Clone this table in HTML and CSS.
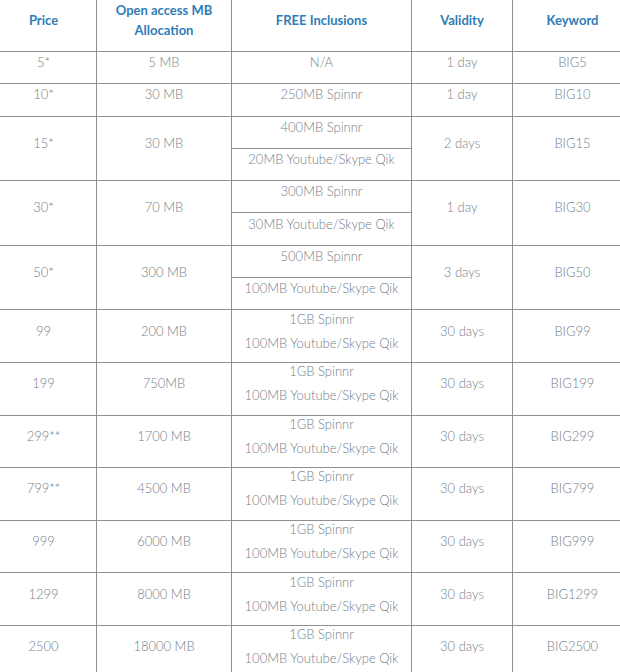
FILE: index.html
```html
<!DOCTYPE html>
<html>
<head>
<meta charset="utf-8">
<link rel="stylesheet" href="styles.css">
</head>
<body>
<table class="plans">
  <colgroup>
    <col class="c-price"><col class="c-mb"><col class="c-free"><col class="c-valid"><col class="c-key">
  </colgroup>
  <thead>
    <tr class="head">
      <th>Price</th>
      <th><div>Open access MB</div><div>Allocation</div></th>
      <th>FREE Inclusions</th>
      <th>Validity</th>
      <th>Keyword</th>
    </tr>
  </thead>
  <tbody>
    <tr class="r1">
      <td>5*</td><td>5 MB</td><td>N/A</td><td>1 day</td><td>BIG5</td>
    </tr>
    <tr class="r1">
      <td>10*</td><td>30 MB</td><td>250MB Spinnr</td><td>1 day</td><td>BIG10</td>
    </tr>
    <tr class="r1">
      <td rowspan="2">15*</td><td rowspan="2">30 MB</td><td>400MB Spinnr</td><td rowspan="2">2 days</td><td rowspan="2">BIG15</td>
    </tr>
    <tr class="r1"><td>20MB Youtube/Skype Qik</td></tr>
    <tr class="r1">
      <td rowspan="2">30*</td><td rowspan="2">70 MB</td><td>300MB Spinnr</td><td rowspan="2">1 day</td><td rowspan="2">BIG30</td>
    </tr>
    <tr class="r1"><td>30MB Youtube/Skype Qik</td></tr>
    <tr class="r1">
      <td rowspan="2">50*</td><td rowspan="2">300 MB</td><td>500MB Spinnr</td><td rowspan="2">3 days</td><td rowspan="2">BIG50</td>
    </tr>
    <tr class="r1"><td>100MB Youtube/Skype Qik</td></tr>
    <tr class="r2">
      <td>99</td><td>200 MB</td><td><div class="two"><span>1GB Spinnr</span><span>100MB Youtube/Skype Qik</span></div></td><td>30 days</td><td>BIG99</td>
    </tr>
    <tr class="r2">
      <td>199</td><td>750MB</td><td><div class="two"><span>1GB Spinnr</span><span>100MB Youtube/Skype Qik</span></div></td><td>30 days</td><td>BIG199</td>
    </tr>
    <tr class="r2">
      <td>299**</td><td>1700 MB</td><td><div class="two"><span>1GB Spinnr</span><span>100MB Youtube/Skype Qik</span></div></td><td>30 days</td><td>BIG299</td>
    </tr>
    <tr class="r2">
      <td>799**</td><td>4500 MB</td><td><div class="two"><span>1GB Spinnr</span><span>100MB Youtube/Skype Qik</span></div></td><td>30 days</td><td>BIG799</td>
    </tr>
    <tr class="r2">
      <td>999</td><td>6000 MB</td><td><div class="two"><span>1GB Spinnr</span><span>100MB Youtube/Skype Qik</span></div></td><td>30 days</td><td>BIG999</td>
    </tr>
    <tr class="r2">
      <td>1299</td><td>8000 MB</td><td><div class="two"><span>1GB Spinnr</span><span>100MB Youtube/Skype Qik</span></div></td><td>30 days</td><td>BIG1299</td>
    </tr>
    <tr class="r2">
      <td>2500</td><td>18000 MB</td><td><div class="two"><span>1GB Spinnr</span><span>100MB Youtube/Skype Qik</span></div></td><td>30 days</td><td>BIG2500</td>
    </tr>
  </tbody>
</table>
</body>
</html>
```
FILE: styles.css
```css
html, body {
  margin: 0;
  padding: 0;
  background: #ffffff;
  overflow: hidden;
}
.plans {
  border-collapse: collapse;
  table-layout: fixed;
  width: 642px;
  margin: -2px 0 0 -10px;
  font-family: Lato, "Open Sans", sans-serif;
  font-size: 13px;
  color: #74818b;
}
.c-price { width: 106px; }
.c-mb { width: 135px; }
.c-free { width: 180px; }
.c-valid { width: 101px; }
.c-key { width: 120px; }
.plans th,
.plans td {
  border: 1px solid #909090;
  text-align: center;
  vertical-align: middle;
  padding: 0 0 11px 0;
  box-sizing: border-box;
}
.plans th {
  color: #2f7cb6;
  font-weight: 700;
  line-height: 20px;
}
.plans td {
  font-weight: 300;
  line-height: 16px;
}
.head th { height: 53px; }
.r1 td { height: 32.3px; }
.r2 td { height: 52.6px; }
.two {
  display: flex;
  flex-direction: column;
  gap: 8px;
  align-items: center;
}
```
